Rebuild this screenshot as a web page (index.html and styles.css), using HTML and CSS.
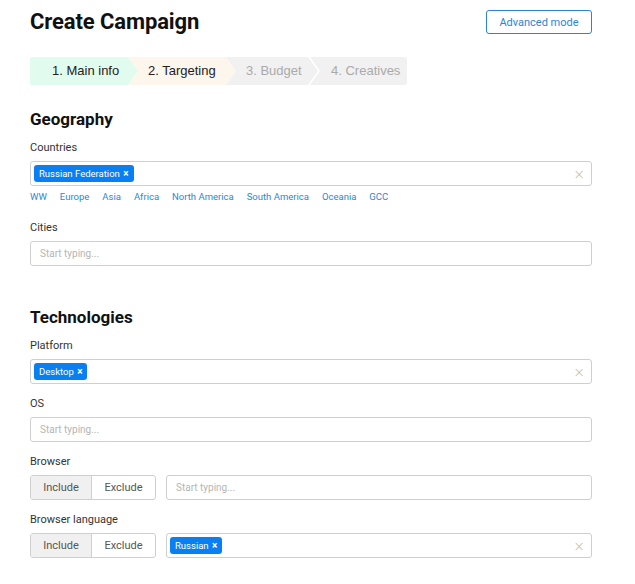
FILE: index.html
```html
<!DOCTYPE html>
<html>
<head>
<meta charset="utf-8">
<link rel="stylesheet" href="styles.css">
</head>
<body>
<div class="page">
  <div class="header">
    <h1 class="title">Create Campaign</h1>
    <button class="btn-outline">Advanced mode</button>
  </div>

  <div class="steps">
    <div class="step done first">1. Main info</div>
    <div class="step current">2. Targeting</div>
    <div class="step todo">3. Budget</div>
    <div class="step todo last">4. Creatives</div>
  </div>

  <h2 class="section-title">Geography</h2>
  <div class="field">
    <div class="label">Countries</div>
    <div class="input">
      <span class="chip">Russian Federation <span class="chip-x">×</span></span>
      <span class="clear">×</span>
    </div>
    <div class="regions">
      <a>WW</a><a>Europe</a><a>Asia</a><a>Africa</a><a>North America</a><a>South America</a><a>Oceania</a><a>GCC</a>
    </div>
  </div>
  <div class="field cities">
    <div class="label">Cities</div>
    <div class="input"><span class="placeholder">Start typing...</span></div>
  </div>

  <h2 class="section-title tech">Technologies</h2>
  <div class="field">
    <div class="label">Platform</div>
    <div class="input">
      <span class="chip">Desktop <span class="chip-x">×</span></span>
      <span class="clear">×</span>
    </div>
  </div>
  <div class="field">
    <div class="label">OS</div>
    <div class="input"><span class="placeholder">Start typing...</span></div>
  </div>
  <div class="field">
    <div class="label">Browser</div>
    <div class="row">
      <div class="toggle">
        <span class="tg active">Include</span><span class="tg">Exclude</span>
      </div>
      <div class="input grow"><span class="placeholder">Start typing...</span></div>
    </div>
  </div>
  <div class="field">
    <div class="label">Browser language</div>
    <div class="row">
      <div class="toggle">
        <span class="tg active">Include</span><span class="tg">Exclude</span>
      </div>
      <div class="input grow">
        <span class="chip">Russian <span class="chip-x">×</span></span>
        <span class="clear">×</span>
      </div>
    </div>
  </div>
</div>
</body>
</html>
```

FILE: styles.css
```css
* { box-sizing: border-box; }
html, body { margin: 0; padding: 0; background: #fff; }
body { font-family: Roboto, "Liberation Sans", Arial, sans-serif; color: #222; }

.page { width: 562px; margin-left: 30px; padding-top: 10px; }

.header { display: flex; justify-content: space-between; align-items: center; height: 24px; }
.title { margin: 0; font-size: 22px; font-weight: 700; line-height: 24px; color: #111; letter-spacing: -0.1px; }
.btn-outline {
  height: 24px; width: 106px; padding: 0; border: 1px solid #2d84d6; border-radius: 3px;
  background: #fff; color: #2d84d6; font-family: Roboto, sans-serif; font-size: 11px;
}

.steps { display: flex; margin-top: 23px; height: 28px; }
.step {
  height: 28px; line-height: 28px; font-family: "Liberation Sans", Arial, sans-serif; font-size: 13px;
  padding-left: 20px; margin-right: -10px; white-space: nowrap;
  clip-path: polygon(0 0, calc(100% - 10px) 0, 100% 50%, calc(100% - 10px) 100%, 0 100%, 10px 50%);
}
.step.done { background: #e2fbef; color: #222; width: 108px; }
.step.current { background: #fdf6ec; color: #222; width: 108px; }
.step.todo { background: #f1f1f1; color: #aaa; width: 92px; }
.step.first { clip-path: polygon(0 0, calc(100% - 10px) 0, 100% 50%, calc(100% - 10px) 100%, 0 100%); border-radius: 2px 0 0 2px; padding-left: 22px; }
.step.todo + .step.todo { margin-left: 2px; }
.step.last { clip-path: polygon(0 0, 100% 0, 100% 100%, 0 100%, 10px 50%); margin-right: 0; padding-left: 21px; width: 97px; border-radius: 0 2px 2px 0; }

.section-title { margin: 24px 0 0; font-size: 17px; font-weight: 700; line-height: 20px; color: #111; }
.section-title.tech { margin-top: 41px; }

.field { margin-top: 12px; }
.field + .field { margin-top: 13px; }
.field.cities { margin-top: 18px; }
.label { font-size: 11px; line-height: 14px; color: #333; margin-bottom: 6px; }

.input {
  position: relative; height: 25px; border: 1px solid #cfcfcf; border-radius: 3px; background: #fff;
  display: flex; align-items: center; padding: 0 3px;
}
.placeholder { font-size: 10px; color: #b5b5b5; padding-left: 6px; }
.chip {
  display: inline-flex; align-items: center; height: 17px; padding: 0 5px; border-radius: 3px;
  background: #0a7ff2; color: #fff; font-size: 9.5px; white-space: pre;
}
.chip-x { font-weight: 700; font-size: 10px; margin-left: 1px; }
.clear { position: absolute; right: 6px; top: 50%; transform: translateY(-50%); color: #b8b8b8; font-size: 14px; line-height: 14px; font-family: "DejaVu Sans", sans-serif; font-weight: 300; }

.regions { display: flex; gap: 13px; margin-top: 5px; font-size: 9.5px; line-height: 12px; }
.regions a { color: #2b87d8; }

.row { display: flex; gap: 10px; }
.grow { flex: 1; }
.toggle { display: flex; height: 25px; border: 1px solid #cfcfcf; border-radius: 3px; overflow: hidden; }
.tg { display: flex; align-items: center; justify-content: center; font-size: 11px; color: #555; width: 63px; }
.tg.active { background: #f0f0f0; width: 61px; border-right: 1px solid #cfcfcf; }
```
